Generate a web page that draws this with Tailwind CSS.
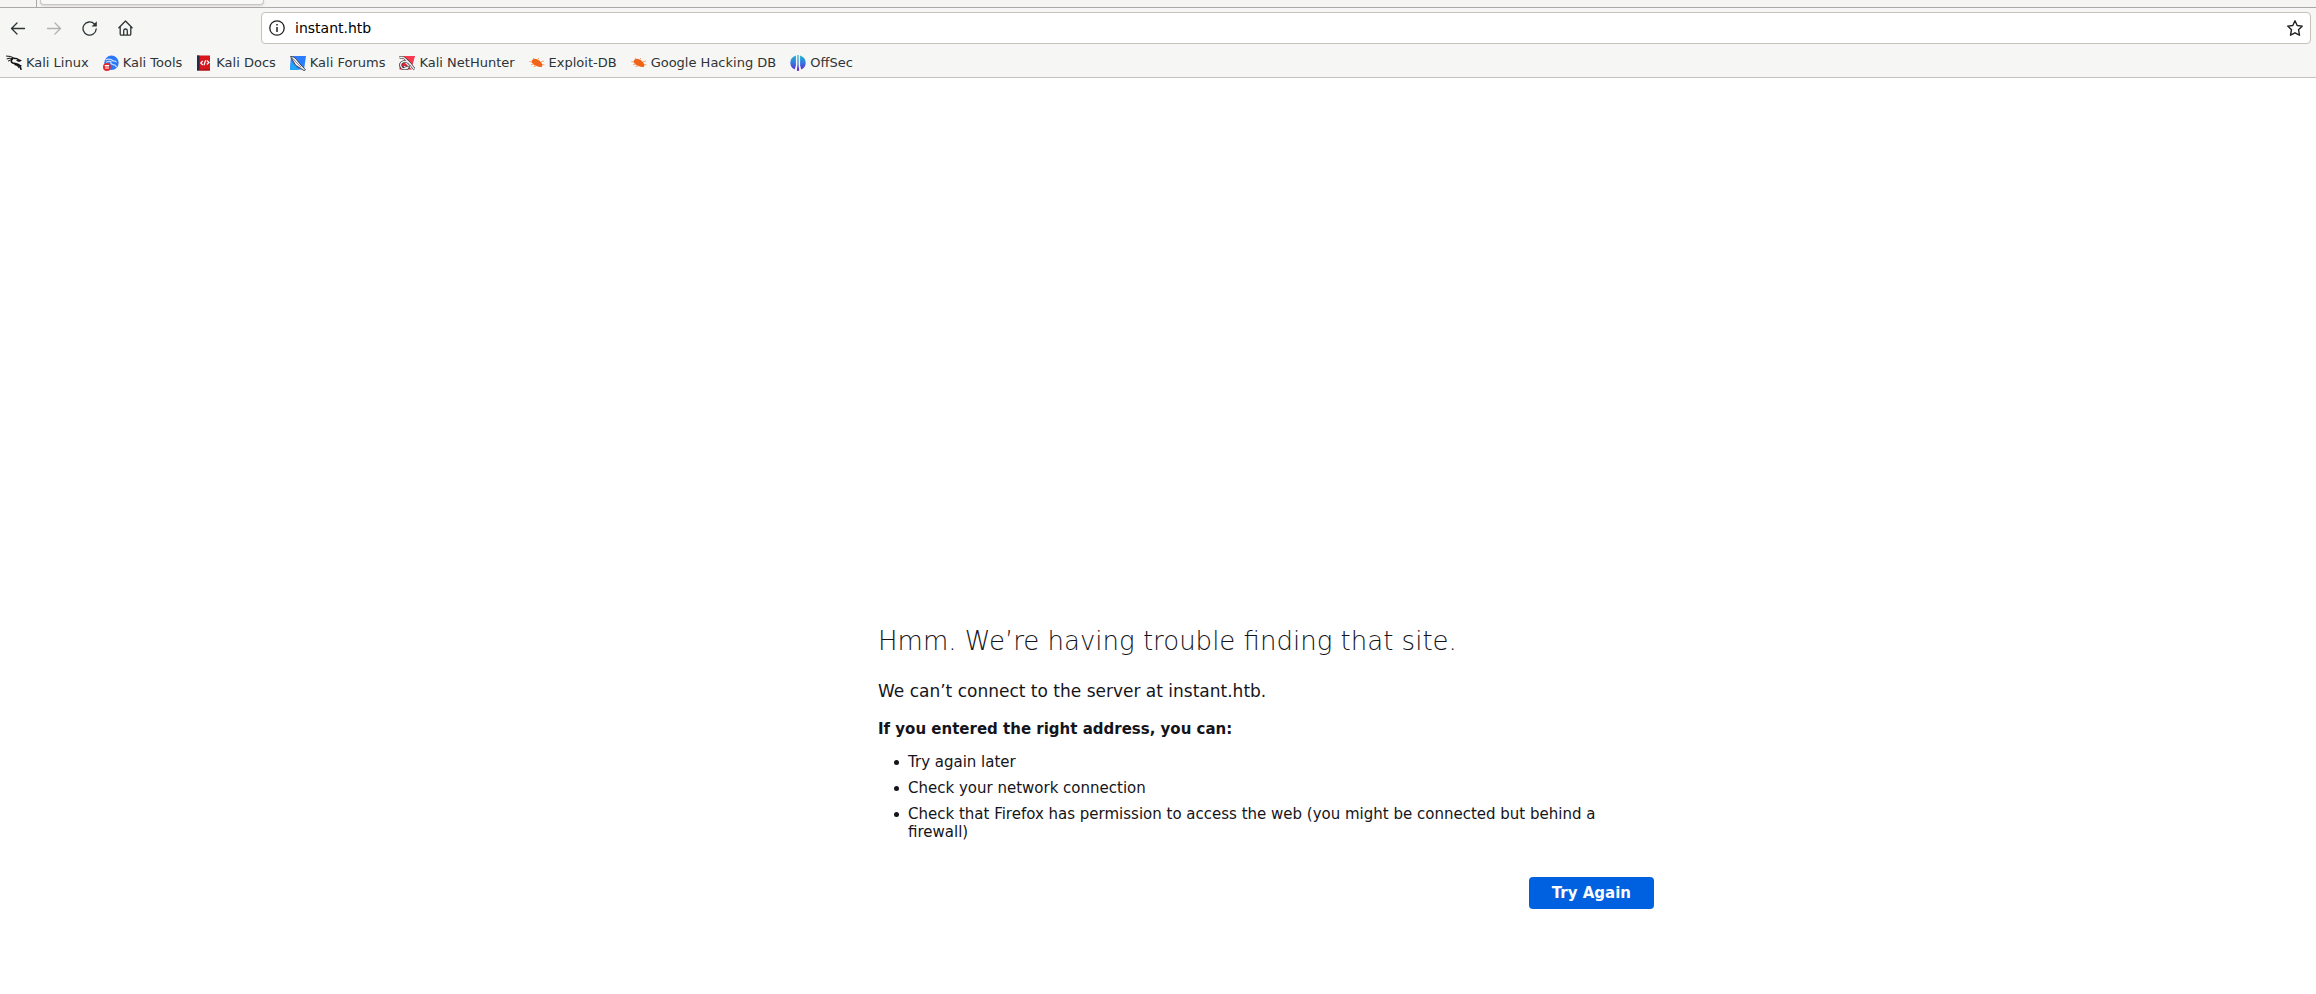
<!DOCTYPE html>
<html lang="en">
<head>
<meta charset="utf-8">
<title>Server Not Found</title>
<script src="https://cdn.jsdelivr.net/npm/@tailwindcss/browser@4"></script>
</head>
<body class="min-h-screen bg-white font-['DejaVu_Sans',sans-serif] text-[#15141a]">
<header class="border-b border-[#c5c0ba] bg-[#f6f6f5]">
  <div class="flex h-2 border-b border-[#aaa9a8] bg-[#f5f4f3]">
    <div class="w-[37px] border-r border-[#a9a9a9]"></div>
    <div class="ml-[3px] h-[5px] w-56 rounded-b border border-t-0 border-[#c6c5c4] bg-[#f8f8f7] shadow-sm"></div>
  </div>
  <nav aria-label="Navigation" class="flex h-10 items-center pr-[5px] pl-2.5">
    <div class="flex w-[251px] gap-5 text-[#2e3436]">
      <button aria-label="Back" class="size-4"><svg viewBox="0 0 16 16" class="size-4" fill="none" stroke="currentColor" stroke-width="1.3" stroke-linecap="round" stroke-linejoin="round"><path d="M14.5 8.5H1.7M7 3 1.5 8.5 7 14"/></svg></button>
      <button aria-label="Forward" disabled class="size-4 text-[#b1b2b2]"><svg viewBox="0 0 16 16" class="size-4" fill="none" stroke="currentColor" stroke-width="1.3" stroke-linecap="round" stroke-linejoin="round"><path d="M1.5 8.5h12.8M9 3l5.500 5.500L9 14"/></svg></button>
      <button aria-label="Reload" class="size-4"><svg viewBox="0 0 16 16" class="size-4" fill="none" stroke="currentColor" stroke-width="1.3" stroke-linecap="round"><path d="M12.400 4A6.600 6.600 0 1 0 14.200 9"/><path d="M14.800 1.200v5.200H9.600z" fill="currentColor" stroke="none"/></svg></button>
      <button aria-label="Home" class="size-4"><svg viewBox="0 0 16 16" class="size-4" fill="none" stroke="currentColor" stroke-width="1.300" stroke-linecap="round" stroke-linejoin="round"><path d="M.9 7.800 7.500 1 14.100 7.800M2.200 6.700v7.200q0 1.300 1.300 1.300h8q1.300 0 1.300-1.300V6.700M5.700 15v-4.200q0-1.800 1.800-1.800t1.800 1.800V15"/></svg></button>
    </div>
    <div class="flex h-8 flex-1 items-center rounded border border-[#c5c0ba] bg-white px-[7px]">
      <button aria-label="Site information" class="size-4"><svg viewBox="0 0 16 16" class="size-4" fill="none" stroke="#202020" stroke-width="1.3"><circle cx="8" cy="8" r="7.200"/><path d="M8 7v5" stroke-width="1.500"/><path d="M8 4v1.500" stroke-width="1.500"/></svg></button>
      <input aria-label="Address" value="instant.htb" class="ml-2.5 min-w-0 flex-1 bg-transparent text-sm text-black outline-none">
      <button aria-label="Bookmark this page" class="size-4"><svg viewBox="0 0 16 16" class="size-4" fill="none" stroke="#202020" stroke-width="1.400" stroke-linejoin="round"><path d="m8 .8 2.200 4.700 5.100.6-3.800 3.600 1 5.500L8 12.800l-4.500 2.400 1-5.500L.7 6.100l5.100-.6z"/></svg></button>
    </div>
  </nav>
  <nav aria-label="Bookmarks" class="flex h-[29px] items-center gap-3.5 px-1.5 text-[13px] whitespace-nowrap text-[#2e3436]">
    <a href="#" class="flex items-center gap-1"><svg viewBox="0 0 16 16" class="size-4" fill="none" stroke="#111" stroke-linecap="round"><path d="M.5 1q4-.4 8.500 2.500M1 3.800q3-1.300 6-.3M2.300 6q2-1.500 4-1.500" stroke-width="1"/><path d="M6.500 3.500q-2.600 3 .3 4.500c2.500 1 5.500.2 7.200 3.200l1 3" stroke-width="1.600"/><path d="M8 3.500q3-.3 4.500 1.200l2 .8-1.500.8-2-.8M13 10l2 .8M9 9.500q3 .5 4 3" stroke-width="1.300"/></svg>Kali Linux</a>
    <a href="#" class="flex items-center gap-1"><svg viewBox="0 0 16 16" class="size-4"><circle cx="8.500" cy="7.800" r="7.200" fill="#2878f8"/><path d="M2.500 5q4.500-2 8 1.200M3 7.300q3.500-1.500 5-.5-1 2 1.500 2.500 3.200.4 4.200 3M10 5.800q2.500-.2 3.500 1.500" fill="none" stroke="#c8dcff" stroke-width="1.200"/><circle cx="3.900" cy="12" r="3.900" fill="#e5262b"/><path d="M1.700 10.500h4.400M3 11v3M5 11v3" stroke="#fff" stroke-width="1"/></svg>Kali Tools</a>
    <a href="#" class="flex items-center gap-1"><svg viewBox="0 0 16 16" class="size-4"><path d="M1 .5h13v15H1z" fill="#d9161b"/><path d="M1 .5h2.500v15H1z" fill="#252b4a"/><path d="M3.500 14h10.500v1.500H3.500z" fill="#a9151b"/><path d="M6.700 6 4.800 8l1.900 2M10.800 5.500 13 7.500l-2.200 2M9.600 5.200 8 10.300" fill="none" stroke="#fff" stroke-width="1.200"/></svg>Kali Docs</a>
    <a href="#" class="flex items-center gap-1"><svg viewBox="0 0 16 16" class="size-4"><path d="M1 1h15l-2 13.500H0z" fill="#2b7cff"/><path d="m1 6 8 9H0z" fill="#24a5f5"/><path d="M.5 1.500q4-.3 6 3l3.300 4.200 5.700 6.100-1.400.9-4-2.700-4.500-2.700Q4 7.500.5 1.500Z" fill="#eee" stroke="#383c44" stroke-width=".9"/><path d="m2 3 5 5 4 4" stroke="#666" stroke-width=".7"/></svg>Kali Forums</a>
    <a href="#" class="flex items-center gap-1"><svg viewBox="0 0 16 16" class="size-4"><path d="M4 1h12l-2.500 9z" fill="#fa3a50"/><path d="M.5 8v6.500H13L5 7z" fill="#e9233f"/><path d="M.5 2.500q4-1 7 2.500l3.500 3.500 4.500 6M11.500 10q-2-4-6-3.500-4 .5-3.800 3.800.5 3.800 4.800 3.500 2 0 2.500-1.500-3.500.5-4-1.500" fill="none" stroke="#292229" stroke-width="2.600"/><path d="M.5 2.500q4-1 7 2.500l3.500 3.500 4.500 6M11.500 10q-2-4-6-3.500-4 .5-3.800 3.800.5 3.800 4.800 3.500 2 0 2.500-1.500-3.500.5-4-1.500" fill="none" stroke="#eee" stroke-width="1.400"/></svg>Kali NetHunter</a>
    <a href="#" class="flex items-center gap-1"><svg viewBox="0 0 16 16" class="size-4"><path d="M2.500 6q2-3.300 6-1.500 3.800 1.500 5 5.500l-.7 2q-3 .3-5.300-1Q3 9.500 2.500 6Z" fill="#f06418"/><path d="m5 4-1-1.200M9 4.500l.8-1.500M12 6.800l3-.8M13 9.500l2.500.3M3 7 .3 6.500M4.500 9 2 9.800M7 11l-2.500.7" stroke="#f4a477" stroke-width="1"/></svg>Exploit-DB</a>
    <a href="#" class="flex items-center gap-1"><svg viewBox="0 0 16 16" class="size-4"><path d="M2.500 6q2-3.300 6-1.500 3.800 1.500 5 5.500l-.7 2q-3 .3-5.300-1Q3 9.500 2.500 6Z" fill="#f06418"/><path d="m5 4-1-1.200M9 4.500l.8-1.500M12 6.800l3-.8M13 9.500l2.500.3M3 7 .3 6.500M4.500 9 2 9.800M7 11l-2.500.7" stroke="#f4a477" stroke-width="1"/></svg>Google Hacking DB</a>
    <a href="#" class="flex items-center gap-1"><svg viewBox="0 0 16 16" class="size-4"><defs><linearGradient id="offsec" x1="0" y1="0" x2="0" y2="1"><stop stop-color="#1cb8c8"/><stop offset=".5" stop-color="#3477e5"/><stop offset="1" stop-color="#6420c8"/></linearGradient></defs><path d="M5.900.5v10L4.700 14.500Q.3 12.500.3 7.800.3 2.500 5.900.5ZM10.100.5v10l1.200 4q4.400-2 4.400-6.700 0-5.300-5.600-7.300ZM7.400 0h1.200v10l.6 5.700H6.800L7.400 10Z" fill="url(#offsec)"/></svg>OffSec</a>
  </nav>
</header>
<main class="mx-auto max-w-[992px] pt-[547px] pl-[216px]">
  <h1 class="text-[26px] leading-8 font-extralight">Hmm. We’re having trouble finding that site.</h1>
  <p class="mt-[22px] text-[17px] leading-6">We can’t connect to the server at instant.htb.</p>
  <p class="mt-4 text-[15px] leading-5 font-bold">If you entered the right address, you can:</p>
  <ul class="mt-3.5 space-y-2 pl-4 text-[15px] leading-[18px]">
    <li class="flex gap-[9px] before:mt-[7px] before:size-[5px] before:shrink-0 before:rounded-full before:bg-[#15141a]">Try again later</li>
    <li class="flex gap-[9px] before:mt-[7px] before:size-[5px] before:shrink-0 before:rounded-full before:bg-[#15141a]">Check your network connection</li>
    <li class="flex gap-[9px] before:mt-[7px] before:size-[5px] before:shrink-0 before:rounded-full before:bg-[#15141a]">Check that Firefox has permission to access the web (you might be connected but behind a firewall)</li>
  </ul>
  <div class="mt-9 flex justify-end">
    <button class="h-8 rounded bg-[#0061e0] px-[23px] text-[15px] font-bold text-[#fbfbfe]">Try Again</button>
  </div>
</main>
</body>
</html>
